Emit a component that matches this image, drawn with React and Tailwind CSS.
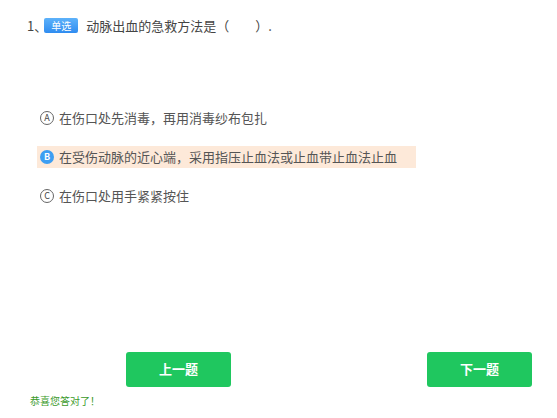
const font = { fontFamily: '"Noto Sans CJK SC", "Noto Sans", sans-serif' };

function Letter({ ch, active }) {
  if (active) {
    return (
      <span className="flex h-[14px] w-[14px] items-center justify-center rounded-full bg-[#3d9ef2] text-[9px] font-bold leading-none text-white">
        {ch}
      </span>
    );
  }
  return (
    <span className="flex h-[14px] w-[14px] items-center justify-center rounded-full border border-[#666] text-[9px] leading-none text-[#444]">
      {ch}
    </span>
  );
}

const options = [
  { key: "A", text: "在伤口处先消毒，再用消毒纱布包扎" },
  { key: "B", text: "在受伤动脉的近心端，采用指压止血法或止血带止血法止血", active: true },
  { key: "C", text: "在伤口处用手紧紧按住" },
];

export default function App() {
  return (
    <div className="h-[418px] w-[557px] bg-white" style={font}>
      <div className="flex items-center pl-[27px] pt-[16px] text-[13px] text-[#444]">
        <span>1、</span>
        <span className="ml-[-3px] flex h-[15px] w-[34px] items-center justify-center rounded-[2px] bg-gradient-to-b from-[#5db2fa] to-[#2f8cf0] text-[10px] leading-none text-white">
          单选
        </span>
        <span className="ml-[8px]">动脉出血的急救方法是（　　）.</span>
      </div>

      <div className="mt-[71px] flex flex-col gap-[17px] pl-[37px]">
        {options.map((o) => (
          <div
            key={o.key}
            className={
              "flex h-[22px] items-center gap-[5px] pl-[3px] text-[13px] text-[#555] " +
              (o.active ? "w-[379px] bg-[#fde9d9]" : "")
            }
          >
            <Letter ch={o.key} active={o.active} />
            <span>{o.text}</span>
          </div>
        ))}
      </div>

      <div className="mt-[145px] flex justify-between pl-[126px] pr-[25px]">
        <button className="h-[35px] w-[105px] rounded-[3px] bg-[#1fc75f] text-[13px] font-bold text-white">
          上一题
        </button>
        <button className="h-[35px] w-[105px] rounded-[3px] bg-[#1fc75f] text-[13px] font-bold text-white">
          下一题
        </button>
      </div>

      <div className="mt-[6px] pl-[30px] text-[10px] text-[#3a9a2a]">恭喜您答对了！</div>
    </div>
  );
}
